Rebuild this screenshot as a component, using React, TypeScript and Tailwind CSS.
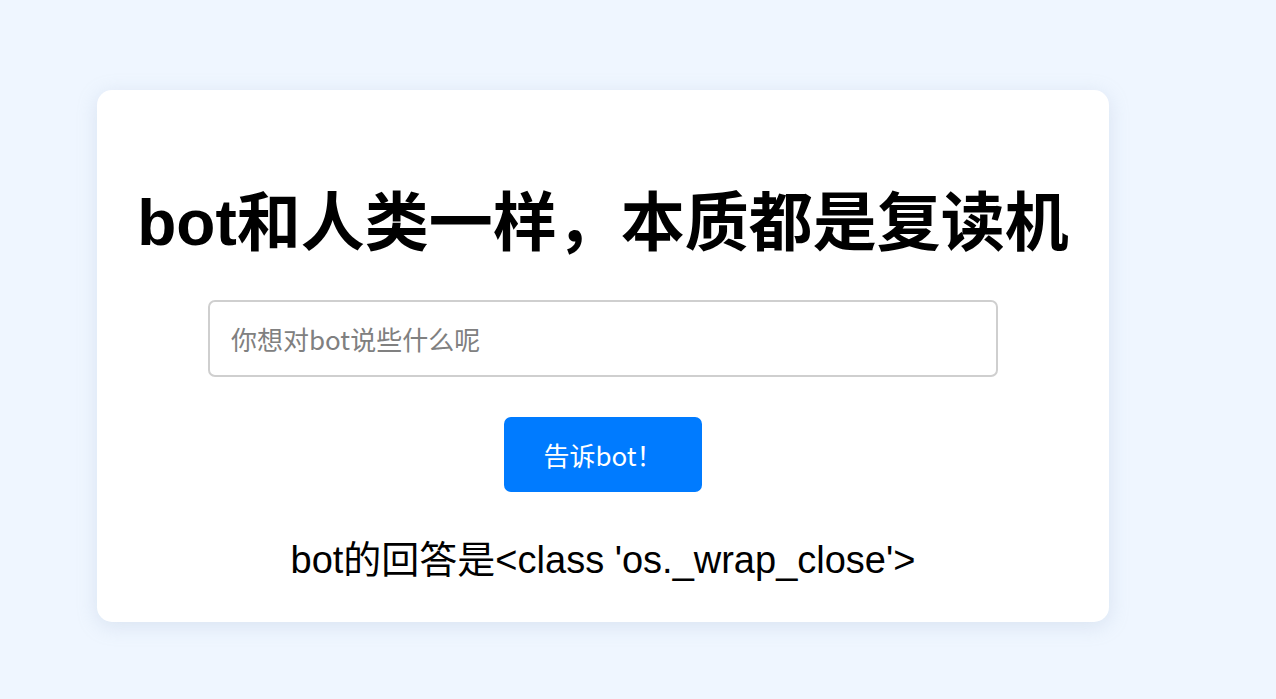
import React from "react";

export default function App() {
  return (
    <div className="min-h-[699px] w-full bg-[#eff6ff] pt-[90px] pb-[77px]">
      <div className="ml-[97px] w-[1012px] h-[532px] rounded-[15px] bg-white shadow-[0_4px_20px_rgba(150,170,200,0.25)] flex flex-col items-center pt-[96px]">
        <h1 className="text-[64px] leading-[74px] font-bold text-black whitespace-nowrap font-['Liberation_Sans','Noto_Sans_CJK_SC',sans-serif]">
          bot和人类一样，本质都是复读机
        </h1>
        <input
          type="text"
          placeholder="你想对bot说些什么呢"
          className="mt-[40px] w-[790px] h-[77px] rounded-[7px] border-2 border-[#cfcfcf] px-[21px] text-[26px] text-black placeholder:text-[#808080] outline-none font-['Noto_Sans_CJK_SC',sans-serif]"
        />
        <button className="mt-[40px] w-[198px] h-[75px] rounded-[7px] bg-[#007bff] text-white text-[26px] flex items-center justify-center font-['Noto_Sans_CJK_SC',sans-serif]">
          告诉bot！
        </button>
        <p className="mt-[46px] text-[38px] leading-[44px] text-black whitespace-nowrap font-['Liberation_Sans','Noto_Sans_CJK_SC',sans-serif]">
          bot的回答是&lt;class 'os._wrap_close'&gt;
        </p>
      </div>
    </div>
  );
}
